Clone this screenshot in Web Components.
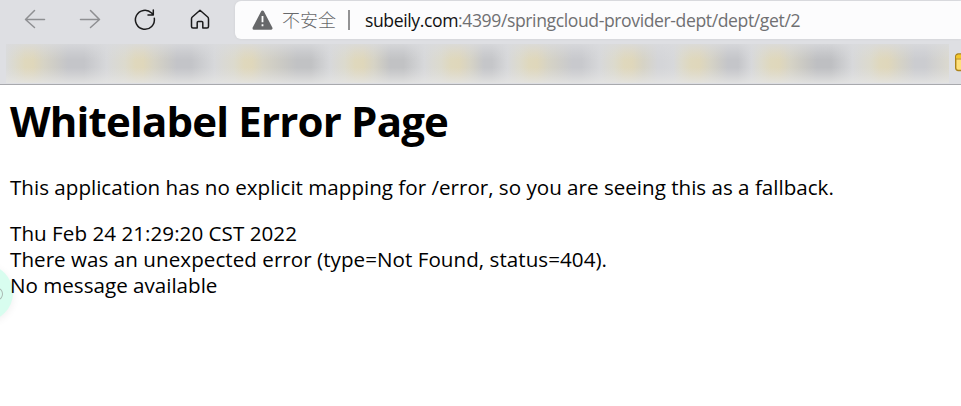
<!DOCTYPE html>
<html lang="en"><head><meta charset="utf-8"><title>Whitelabel Error Page</title>
<style>body{margin:0;background:#fff;overflow:hidden;font-family:"Open Sans","Noto Sans CJK SC",sans-serif}</style></head>
<body><browser-window><error-page></error-page></browser-window>
<script>
const define=(name,html,setup)=>customElements.define(name,class extends HTMLElement{
  connectedCallback(){
    if(this.shadowRoot)return;
    const t=document.createElement('template');t.innerHTML=html;
    this.attachShadow({mode:'open'}).append(t.content.cloneNode(true));
    if(setup)setup(this.shadowRoot,this);
  }
});
const icons={
 back:'<path d="M44.5 19.5H25.5M34.5 10.5L25.5 19.5L34.5 27.5"/>',
 forward:'<path d="M80.5 19.5H99.5M90.5 10.5L99.5 19.5L90.5 27.5"/>',
 reload:'<path d="M154.3 18.2A9.5 9.5 0 1 1 151.6 13L153.2 14.8M153.3 10V15H148"/>',
 home:'<path d="M200 10.2L192.3 17Q191.5 17.7 191.5 19V26.5Q191.5 28 193 28H197.2V22.5Q197.2 21.5 198.2 21.5H201.8Q202.8 21.5 202.8 22.5V28H207Q208.5 28 208.5 26.5V19Q208.5 17.7 207.7 17Z"/>'
};
const boxes={back:'20 0 30 40',forward:'75 0 30 40',reload:'130 0 30 40',home:'185 0 30 40'};
define('nav-icon',`<style>:host{display:block;width:30px;height:40px;color:#1b1b1c}:host([muted]){color:#8e8f92}svg{display:block;fill:none;stroke:currentColor;stroke-width:1.5;stroke-linecap:round;stroke-linejoin:round}</style><svg width="30" height="40"></svg>`,
 (r,h)=>{const s=r.querySelector('svg'),n=h.getAttribute('name');s.setAttribute('viewBox',boxes[n]);s.innerHTML=icons[n]});
define('address-bar',`<style>
:host{display:flex;box-sizing:border-box;height:38px;margin-top:1px;flex:1;background:#fcfcfd;border-radius:6px 0 0 6px;box-shadow:0 0 3px #0001;padding-left:17px;align-items:center;white-space:pre;line-height:38px;color:#707072}
svg{flex:none;width:21px;height:20px}
.warn{font:300 18px/38px "Noto Sans CJK SC",sans-serif;margin:-2px 0 0 9px;width:54px;color:#68696b}
.bar{width:2px;height:20px;background:#929294;margin:0 15px 0 12px}
.url{font-size:17.6px;letter-spacing:-.4px}b{font-weight:400;color:#111}
</style><svg viewBox="0 0 21 20"><path d="M10.5 2L19 18.2H2Z" fill="#67686a" stroke="#67686a" stroke-width="3" stroke-linejoin="round"/><path d="M10.5 6V12.3M10.5 14.3V16.3" stroke="#fff" stroke-width="1.8"/></svg><span class="warn">不安全</span><span class="bar"></span><span class="url"><b>subeily.com</b>:4399/springcloud-provider-dept/dept/get/2</span>`);
define('bookmarks-bar',`<style>
:host{display:flex;height:40px;box-sizing:border-box;padding-left:6px;align-items:flex-start}
.haze{width:943px;height:39px}
svg{margin:9px 0 0 6px}
</style><div class="haze"></div><svg width="6" height="19"><rect x=".7" y="1" width="18" height="16.5" rx="2.5" fill="#ffe07b" stroke="#ad841b" stroke-width="1.4"/><path d="M1.4 3.4Q1.4 1.8 3 1.8H6V5.4H1.4Z" fill="#f5c827"/><path d="M1 6H6" stroke="#b88c1d"/></svg>`,
 r=>{
  const yellow=[28,138,247,358,454,532,627,694,774,883];
  const grey=[[76,16,'#c4c5c9'],[184,14,'#c3c4c8'],[304,14,'#c1c2c4'],[397,13,'#c1c2c4'],[488,8,'#c5c6c9'],[577,9,'#c8c9cd'],[660,4,'#d4d5d8'],[733,10,'#c4c5c9'],[824,14,'#bebfc2'],[920,10,'#cbccd0']];
  const stops=['#dadbdb 0px'];
  yellow.forEach((x,i)=>{
   const [c,w,col]=grey[i];
   stops.push(`#dcdacd ${x-19}px`,`#dfd8bd ${x-9}px`,`#dfd7bb ${x-1}px`,`#d6d3c5 ${x+10}px`,`${col} ${Math.max(x+17,c-6-w/2)}px`,`${col} ${c-6+w/2}px`);
   if(i<9)stops.push(`#d7d8da ${(c-6+w/2+yellow[i+1]-19)/2+2}px`);
  });
  stops.push('#dbd9cf 943px');
  r.querySelector('.haze').style.backgroundImage='linear-gradient(#dadbdec8 0%,#dadbde50 22%,#dadbde00 40%,#dfe0e100 60%,#e2e2e260 78%,#e5e5e4d8 100%),linear-gradient(90deg,'+stops.join(',')+')';
 });
define('browser-window',`<style>
:host{display:flex;flex-direction:column;position:relative;width:961px;height:406px;overflow:hidden}
header{height:85px;box-sizing:border-box;background:#dedfe3;border-bottom:1px solid #a8a9ad}
.tools{display:flex;height:44px;padding-left:20px;gap:25px}
address-bar{margin-left:-5px}
.bubble{position:absolute;left:-43px;top:265px;width:56px;height:56px;border-radius:50%;background:#d8fdef;box-shadow:0 2px 8px #0001}
.bubble i{position:absolute;left:36px;top:23px;width:8px;height:10px;border:1px solid #aab9b3;border-radius:50%}
main{position:relative}
</style><header><div class="tools"><nav-icon name="back" muted></nav-icon><nav-icon name="forward" muted></nav-icon><nav-icon name="reload"></nav-icon><nav-icon name="home"></nav-icon><address-bar></address-bar></div><bookmarks-bar></bookmarks-bar></header><div class="bubble"><i></i></div><main><slot></slot></main>`);
define('error-page',`<style>
:host{display:block;padding:9px 10px;color:#000;font-size:20.6px;line-height:26px;white-space:nowrap}
h1{margin:0;font-size:42px;line-height:53px;letter-spacing:-.82px}
p{margin:27px 0 20px}
.c,.b{letter-spacing:.04px}
</style><h1><span>Whitelabel Error Page</span></h1><p><span class="a">This application has no explicit mapping for /error, so you are seeing this as a fallback.</span></p><div><span class="b">Thu Feb 24 21:29:20 CST 2022</span></div><div><span class="c">There was an unexpected error (type=Not Found, status=404).</span></div><div><span class="d">No message available</span></div>`);
</script></body></html>
